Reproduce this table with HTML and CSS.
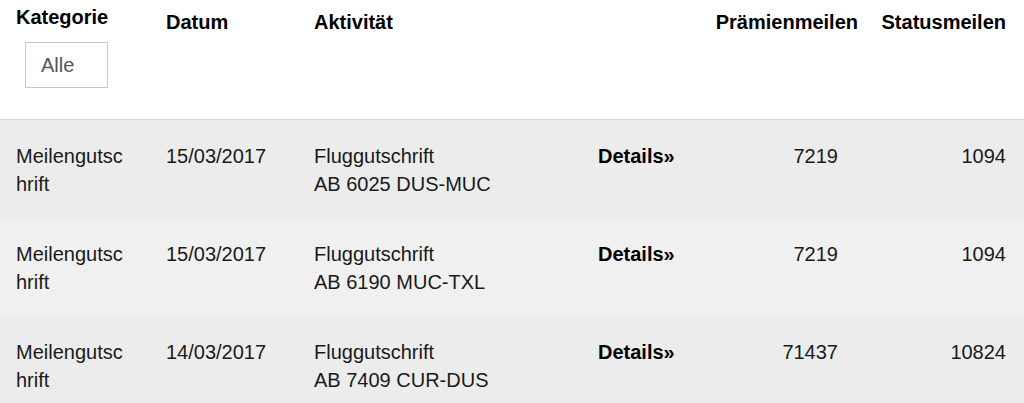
FILE: index.html
```html
<!DOCTYPE html>
<html lang="de">
<head>
<meta charset="utf-8">
<title>Meilenkonto</title>
<link rel="stylesheet" href="styles.css">
</head>
<body>
<div class="table">
  <div class="head">
    <div class="hcell cat">
      <div class="hlabel">Kategorie</div>
      <div class="select">Alle</div>
    </div>
    <div class="hcell">Datum</div>
    <div class="hcell">Aktivität</div>
    <div class="hcell"></div>
    <div class="hcell num">Prämienmeilen</div>
    <div class="hcell num last">Statusmeilen</div>
  </div>
  <div class="row">
    <div class="cell cat">Meilengutschrift</div>
    <div class="cell">15/03/2017</div>
    <div class="cell">Fluggutschrift<br>AB 6025 DUS-MUC</div>
    <div class="cell details">Details»</div>
    <div class="cell num pm">7219</div>
    <div class="cell num last">1094</div>
  </div>
  <div class="row alt">
    <div class="cell cat">Meilengutschrift</div>
    <div class="cell">15/03/2017</div>
    <div class="cell">Fluggutschrift<br>AB 6190 MUC-TXL</div>
    <div class="cell details">Details»</div>
    <div class="cell num pm">7219</div>
    <div class="cell num last">1094</div>
  </div>
  <div class="row">
    <div class="cell cat">Meilengutschrift</div>
    <div class="cell">14/03/2017</div>
    <div class="cell">Fluggutschrift<br>AB 7409 CUR-DUS</div>
    <div class="cell details">Details»</div>
    <div class="cell num pm">71437</div>
    <div class="cell num last">10824</div>
  </div>
</div>
</body>
</html>
```

FILE: styles.css
```css
html, body {
  margin: 0;
  padding: 0;
  background: #ffffff;
}
body {
  font-family: "Liberation Sans", Arial, sans-serif;
  font-size: 20px;
  line-height: 28px;
  color: #1a1a1a;
}
.head,
.row {
  display: grid;
  grid-template-columns: 150px 148px 284px 1fr 160px 166px;
  align-items: start;
}
.head {
  height: 119px;
  border-bottom: 1px solid #d9d9d9;
  font-weight: bold;
  color: #000000;
  font-size: 20px;
}
.hcell {
  padding: 8px 0 0 16px;
}
.hcell.cat {
  padding-top: 3px;
}
.select {
  margin: 11px 0 0 9px;
  width: 81px;
  height: 44px;
  border: 1px solid #c8c8c8;
  box-sizing: content-box;
  font-weight: normal;
  color: #555555;
  font-size: 20px;
  line-height: 44px;
  text-indent: 15px;
  background: #ffffff;
}
.row {
  background: #ececec;
  padding: 22px 0 20px;
  height: 56px;
}
.row.alt {
  background: #f0f0f0;
}
.cell {
  padding-left: 16px;
}
.cell.cat {
  padding-right: 24px;
  word-break: break-all;
}
.details {
  font-weight: bold;
  color: #000000;
}
.num {
  text-align: right;
  padding-left: 0;
}
.cell.pm {
  padding-right: 20px;
}
.last {
  padding-right: 18px;
}
```
